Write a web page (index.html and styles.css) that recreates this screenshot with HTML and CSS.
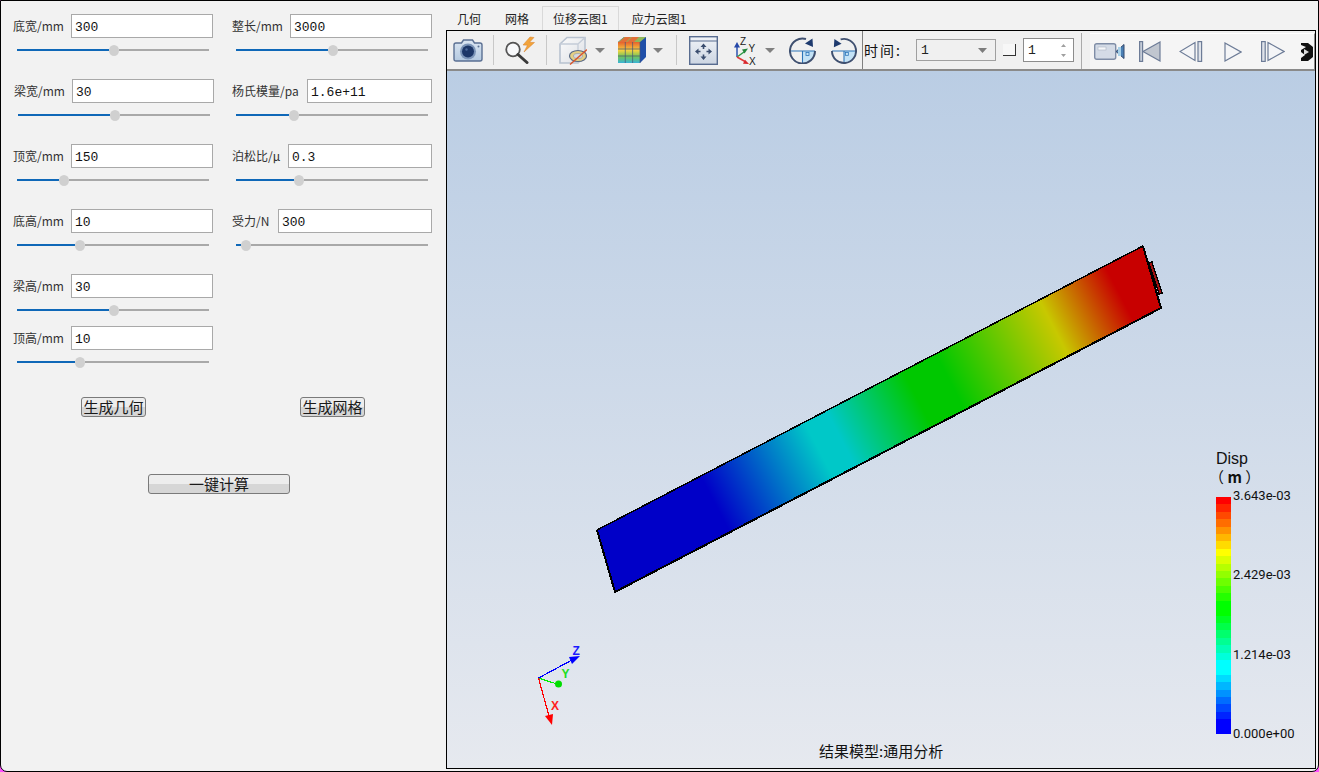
FILE: index.html
```html
<!DOCTYPE html>
<html lang="zh-CN">
<head>
<meta charset="utf-8">
<title>结果模型</title>
<link rel="stylesheet" href="styles.css">
</head>
<body>
<div class="window">
  <aside class="side">
    <div class="fields">
      <div class="col">
        <div class="field"><div class="row"><label class="lbl w58">底宽/mm</label><input class="inp wa" value="300" readonly></div><div class="slider"><i class="fill" style="width:92px"></i><b class="knob"></b><i class="rest"></i></div></div>
        <div class="field shift"><div class="row"><label class="lbl w58">梁宽/mm</label><input class="inp wa" value="30" readonly></div><div class="slider"><i class="fill" style="width:92px"></i><b class="knob"></b><i class="rest"></i></div></div>
        <div class="field"><div class="row"><label class="lbl w58">顶宽/mm</label><input class="inp wa" value="150" readonly></div><div class="slider"><i class="fill" style="width:42px"></i><b class="knob"></b><i class="rest"></i></div></div>
        <div class="field"><div class="row"><label class="lbl w58">底高/mm</label><input class="inp wa" value="10" readonly></div><div class="slider"><i class="fill" style="width:58px"></i><b class="knob"></b><i class="rest"></i></div></div>
        <div class="field tight"><div class="row"><label class="lbl w58">梁高/mm</label><input class="inp wa" value="30" readonly></div><div class="slider"><i class="fill" style="width:92px"></i><b class="knob"></b><i class="rest"></i></div></div>
        <div class="field last"><div class="row"><label class="lbl w58">顶高/mm</label><input class="inp wa" value="10" readonly></div><div class="slider"><i class="fill" style="width:58px"></i><b class="knob"></b><i class="rest"></i></div></div>
      </div>
      <div class="col">
        <div class="field"><div class="row"><label class="lbl w58">整长/mm</label><input class="inp wb" value="3000" readonly></div><div class="slider"><i class="fill" style="width:92px"></i><b class="knob"></b><i class="rest"></i></div></div>
        <div class="field"><div class="row"><label class="lbl w75">杨氏模量/pa</label><input class="inp wb" value="1.6e+11" readonly></div><div class="slider"><i class="fill" style="width:53px"></i><b class="knob"></b><i class="rest"></i></div></div>
        <div class="field"><div class="row"><label class="lbl w56">泊松比/μ</label><input class="inp wb" value="0.3" readonly></div><div class="slider"><i class="fill" style="width:58px"></i><b class="knob"></b><i class="rest"></i></div></div>
        <div class="field"><div class="row"><label class="lbl w46">受力/N</label><input class="inp wb" value="300" readonly></div><div class="slider"><i class="fill" style="width:5px"></i><b class="knob"></b><i class="rest"></i></div></div>
      </div>
    </div>
    <div class="actions">
      <button class="btn small">生成几何</button>
      <button class="btn small">生成网格</button>
    </div>
    <button class="btn wide">一键计算</button>
  </aside>

  <main class="main">
    <nav class="tabs">
      <span class="tab">几何</span>
      <span class="tab">网格</span>
      <span class="tab active">位移云图1</span>
      <span class="tab">应力云图1</span>
    </nav>
    <section class="view">
      <div class="bar">
        <div class="tools">
          <svg class="i-camera" width="30" height="24" viewBox="0 0 30 24"><defs><linearGradient id="cam" x1="0" y1="0" x2="0" y2="1"><stop offset="0" stop-color="#dbe6f2"/><stop offset="1" stop-color="#b4c9e0"/></linearGradient></defs><path d="M1 7q0-2 2-2h5.500l2-3h9l2 3H27q2 0 2 2v14q0 2-2 2H3q-2 0-2-2z" fill="url(#cam)" stroke="#5a6f92" stroke-width="1.400"/><circle cx="15" cy="13.500" r="8" fill="#7c95b8"/><circle cx="15" cy="13.500" r="6" fill="#1d3768"/><circle cx="13.500" cy="11.500" r="1.200" fill="#4c6a9c"/><circle cx="25.500" cy="8.500" r="1" fill="#5a6f92"/></svg>
          <span class="sep s1"></span>
          <svg class="i-lens" width="30" height="28" viewBox="0 0 30 28"><circle cx="8" cy="13.500" r="6.800" fill="#f8f9fb" stroke="#555" stroke-width="1.800"/><path d="M13 18.500l9 8" stroke="#3a3a3a" stroke-width="3" stroke-linecap="round"/><path d="M25 1l-7 8 4.500 .2L19 16l10.500-9.500-5-.2L29 1.500z" fill="#f2a33a" stroke="#d9802a" stroke-width=".5"/></svg>
          <span class="sep s2"></span>
          <svg class="i-box" width="28" height="29" viewBox="0 0 28 29"><defs><linearGradient id="boxf" x1="0" y1="0" x2="1" y2="1"><stop offset="0" stop-color="#fbfbfc"/><stop offset="1" stop-color="#dcdfe4"/></linearGradient></defs><path d="M1 8l7-6.500h18v18l-7 7.500H1z" fill="url(#boxf)" stroke="#b8c2d0" stroke-width="1.600"/><path d="M1 8h18v19M19 8l7-6.500" fill="none" stroke="#c4ccd8" stroke-width="1.300"/><ellipse cx="19" cy="20" rx="8.500" ry="5.500" fill="#e4cf85" stroke="#5b6b86" stroke-width="1.200"/><ellipse cx="19" cy="20" rx="4.500" ry="2.500" fill="#d5d9e0" stroke="#8b95a8" stroke-width=".6"/><path d="M11 28.500l17-15" stroke="#d9542b" stroke-width="1.400"/></svg>
          <svg class="tri t1" width="10" height="5" viewBox="0 0 10 5"><path d="M0 0h10l-5 5z" fill="#808080"/></svg>
          <svg class="i-cube" width="28" height="28" viewBox="0 0 28 28"><defs><linearGradient id="cubef" x1="0" y1="0" x2="0" y2="1"><stop offset="0" stop-color="#e8602c"/><stop offset=".4" stop-color="#f4d23f"/><stop offset=".7" stop-color="#6fc45a"/><stop offset="1" stop-color="#38b4d8"/></linearGradient></defs><path d="M0 6l6-5h22v20l-6 6H0z" fill="#1f4fa8"/><path d="M0 6l6-5h22l-6 5z" fill="#8fb85a"/><path d="M7 1l-6 5h7l5-5zM14 1l-5 5h7l5-5z" fill="#e0703a"/><rect y="6" width="22" height="21" fill="url(#cubef)"/><path d="M7.300 6v21M14.600 6v21M0 13h22M0 20h22M22 6v21" stroke="#44557a" stroke-width=".7"/></svg>
          <svg class="tri t2" width="10" height="5" viewBox="0 0 10 5"><path d="M0 0h10l-5 5z" fill="#808080"/></svg>
          <span class="sep s3"></span>
          <svg class="i-fit" width="29" height="29" viewBox="0 0 29 29"><defs><linearGradient id="fitb" x1="0" y1="0" x2="0" y2="1"><stop offset="0" stop-color="#f0f3f7"/><stop offset="1" stop-color="#ccd5e2"/></linearGradient></defs><rect x=".7" y=".7" width="27.600" height="27.600" fill="url(#fitb)" stroke="#586c90" stroke-width="1.400"/><path d="M1 5h27" stroke="#586c90" stroke-width="1.200"/><path d="M14.500 7.500l3 3.500h-2.200v2h-1.600v-2h-2.200zM14.500 24l-3-3.500h2.200v-2h1.600v2h2.200zM6 15.500l3.500-3v2.200h2v1.600h-2v2.200zM23 15.500l-3.500 3v-2.200h-2v-1.600h2v-2.200z" fill="#3a4d6e"/></svg>
          <svg class="i-axes" width="25" height="31" viewBox="0 0 25 31"><path d="M4 22V12" stroke="#2c55b0" stroke-width="1.500"/><path d="M4 7l-3 5.500h6z" fill="#2447a8"/><path d="M4 22l7-5" stroke="#2e9a48" stroke-width="1.500"/><path d="M15 13.500l-6 1 2.500 4z" fill="#23863d"/><path d="M4 22l8 4.500" stroke="#e0383a" stroke-width="1.500"/><path d="M16 29l-6-.2 2-4z" fill="#d9282c"/><text class="axt" x="7" y="10">Z</text><text class="axt" x="15.500" y="17">Y</text><text class="axt" x="16" y="30">X</text></svg>
          <svg class="tri t3" width="10" height="5" viewBox="0 0 10 5"><path d="M0 0h10l-5 5z" fill="#808080"/></svg>
          <svg class="i-rot1" width="27" height="27" viewBox="0 0 27 27"><path d="M13.500 14H26A12.500 12.500 0 0 1 13.500 26.500z" fill="#c3e2f6"/><path d="M1 14h25M13.500 14v12.500" stroke="#2c74b8" stroke-width="1.100"/><rect x="17" y="15.500" width="3" height="3" fill="none" stroke="#2c74b8" stroke-width=".8"/><path d="M17 2A12.500 12.500 0 1 0 26 14" fill="none" stroke="#3f5070" stroke-width="2"/><path d="M23.500 1.500l.5 8.500-8-3.500z" fill="#1e3a6e"/></svg>
          <svg class="i-rot2" width="26" height="27" viewBox="0 0 27 27"><path d="M13.500 14H26A12.500 12.500 0 0 1 13.500 26.500z" fill="#c3e2f6"/><path d="M1 14h25M13.500 14v12.500" stroke="#2c74b8" stroke-width="1.100"/><rect x="15" y="15.500" width="3" height="3" fill="none" stroke="#2c74b8" stroke-width=".8"/><path d="M10 2A12.500 12.500 0 1 1 1 14" fill="none" stroke="#3f5070" stroke-width="2"/><path d="M3.500 1.500L3 10l8-3.500z" fill="#1e3a6e"/></svg>
        </div>
        <div class="time">
          <span class="time-label">时间:</span>
          <div class="combo"><span>1</span><svg width="9" height="5" viewBox="0 0 9 5"><path d="M0 0h9L4.500 5z" fill="#7c7c7c"/></svg></div>
          <span class="check"></span>
          <div class="spin"><span>1</span><svg width="7" height="15" viewBox="0 0 7 15"><path d="M3.500 1L6 4H1zM3.500 14L1 11h5z" fill="#a0a0a0"/></svg></div>
          <span class="sep2"></span>
        </div>
        <div class="play">
          <svg class="p-video" width="31" height="19" viewBox="0 0 31 19"><rect x=".7" y="1.700" width="21" height="15.600" rx="2" fill="#d4dbe6" stroke="#7f8da6" stroke-width="1.400"/><rect x="4" y="5" width="8" height="3" fill="#f6f7f9" stroke="#aab4c4" stroke-width=".6"/><path d="M22 9.500l8-7v14z" fill="#4b80b5" stroke="#33486c"/><path d="M24 5h3v9h-3z" fill="#a7d0e8"/></svg>
          <svg class="p-first" width="22" height="21" viewBox="0 0 22 21"><rect x=".6" y=".6" width="3" height="19.800" fill="#c5ccd8" stroke="#6d7c97" stroke-width="1.200"/><path d="M21 1v19L4 10.500z" fill="#c0c6cf" stroke="#6d7c97" stroke-width="1.200"/></svg>
          <svg class="p-prev" width="24" height="21" viewBox="0 0 24 21"><path d="M16 1.500v18L1 10.500z" fill="#f4f5f7" stroke="#6d7c97" stroke-width="1.200"/><rect x="19" y=".6" width="3.600" height="19.800" fill="#dfe3ea" stroke="#6d7c97" stroke-width="1.200"/></svg>
          <svg class="p-play" width="18" height="20" viewBox="0 0 18 20"><path d="M1 1v18l16-9z" fill="#f4f5f7" stroke="#6d7c97" stroke-width="1.200"/></svg>
          <svg class="p-next" width="24" height="21" viewBox="0 0 24 21"><rect x=".6" y=".6" width="3.600" height="19.800" fill="#dfe3ea" stroke="#6d7c97" stroke-width="1.200"/><path d="M7 1.500v18l16-9z" fill="#f4f5f7" stroke="#6d7c97" stroke-width="1.200"/></svg>
          <svg class="p-more" width="12" height="18" viewBox="0 0 12 18"><path d="M0 0h7l5 4v10l-5 4H0v-3l4-3-4-3V7l5-3-5-2z" fill="#111"/><path d="M3 6l5 3-5 3z" fill="#ddd"/></svg>
        </div>
      </div>
      <div class="canvas">
        <svg class="scene" width="868" height="697" viewBox="447 71 868 697">
          <defs>
            <linearGradient id="disp" gradientUnits="userSpaceOnUse" x1="606" y1="561" x2="1152" y2="276">
              <stop offset="0" stop-color="#0000c8"/>
              <stop offset=".2" stop-color="#0000c8"/>
              <stop offset=".39" stop-color="#00c8c8"/>
              <stop offset=".43" stop-color="#00c8c8"/>
              <stop offset=".57" stop-color="#00c800"/>
              <stop offset=".63" stop-color="#00c800"/>
              <stop offset=".82" stop-color="#c8c800"/>
              <stop offset=".94" stop-color="#c80000"/>
              <stop offset="1" stop-color="#c80000"/>
            </linearGradient>
          </defs>
          <path d="M1149 263l3-1 10 31-3 1z" fill="#a01010" stroke="#000" stroke-width="1.300" shape-rendering="crispEdges"/>
          <path d="M597 530L1143 246 1161 308 615 592z" fill="url(#disp)" shape-rendering="crispEdges"/>
          <path d="M597 530L1143 246" stroke="#000" stroke-width="1.500" fill="none" shape-rendering="crispEdges"/>
          <path d="M1143 246L1161 308 615 592 597 530" stroke="#000" stroke-width="2" fill="none" shape-rendering="crispEdges"/>
          <path d="M538.500 678L572 660" stroke="#0000ff" stroke-width="1.200" shape-rendering="crispEdges"/>
          <path d="M569 657l11-1-8 8z" fill="#0000ff"/>
          <path d="M538.500 678L557 684" stroke="#00ee00" stroke-width="1.200" shape-rendering="crispEdges"/>
          <circle cx="558.500" cy="684" r="3.500" fill="#00dd00"/>
          <path d="M538.500 678L549 716" stroke="#ff0000" stroke-width="1.200" shape-rendering="crispEdges"/>
          <path d="M545 716l8-2-1 11z" fill="#ff0000"/>
          <text class="tz" x="572.500" y="655">Z</text>
          <text class="ty" x="561.500" y="678">Y</text>
          <text class="tx" x="551" y="710">X</text>
        </svg>
        <div class="legend">
          <div class="legend-title">Disp</div>
          <div class="legend-unit">（ <b>m</b> ）</div>
          <div class="legend-body">
            <div class="ramp"></div>
            <div class="ticks"><span>3.643e-03</span><span>2.429e-03</span><span>1.214e-03</span><span>0.000e+00</span></div>
          </div>
        </div>
        <div class="caption">结果模型:通用分析</div>
      </div>
    </section>
  </main>
</div>
</body>
</html>
```
FILE: styles.css
```css
* { box-sizing: border-box; }
html, body { margin: 0; padding: 0; height: 100%; background: #ff4dff; overflow: hidden; }
body { font-family: "Noto Sans CJK SC", "Liberation Sans", sans-serif; color: #222; }

.window {
  display: flex;
  width: 1319px;
  height: 772px;
  border: 1px solid #000;
  border-radius: 0 0 7px 7px;
  background: #f2f2f2;
  overflow: hidden;
}

/* left form */
.side { flex: 0 0 445px; padding: 13px 0 0 12px; }
.fields { display: grid; grid-template-columns: 202px 200px; column-gap: 17px; }
.col { display: flex; flex-direction: column; }
.field { height: 44px; margin-bottom: 21px; }
.field.tight { margin-bottom: 8px; }
.field.last { margin-bottom: 0; }
.field.shift { margin-left: 1px; }
.row { display: flex; align-items: center; height: 24px; }
.lbl { font-size: 12px; line-height: 16px; white-space: nowrap; color: #333; }
.w58 { flex: 0 0 58px; }
.w75 { flex: 0 0 75px; }
.w56 { flex: 0 0 56px; }
.w46 { flex: 0 0 46px; }
.inp {
  height: 24px;
  padding: 2px 3px 0;
  border: 1px solid #a9a9a9;
  background: #fff;
  color: #111;
  font: 13px/20px "Liberation Mono", monospace;
  outline: none;
  min-width: 0;
}
.wa { width: 142px; }
.wb { flex: 1; }
.slider { display: flex; align-items: center; height: 16px; margin: 4px 4px 0 4px; width: 192px; }
.fill { display: block; height: 2px; background: #0f68b8; }
.knob { flex: 0 0 10px; height: 11px; border-radius: 50%; background: #d0d0d0; }
.rest { flex: 1; height: 2px; background: #a9a9a9; }

.actions { display: flex; gap: 154px; margin: 27px 0 0 68px; }
.btn {
  display: block;
  height: 20px;
  padding: 0;
  border: 1px solid #7a7a7a;
  border-radius: 3px;
  background: linear-gradient(#ededed 0 50%, #d6d6d6 50%);
  color: #1a1a1a;
  font: 15px/18px "Noto Sans CJK SC", sans-serif;
}
.small { width: 65px; }
.wide { width: 142px; margin: 57px 0 0 135px; }

/* right */
.main { flex: 1; display: flex; flex-direction: column; min-width: 0; padding: 0 2px 2px 0; }
.tabs { display: flex; align-items: stretch; height: 24px; margin-top: 5px; flex: none; }
.tab { padding: 0 13px 0 11px; font-size: 12px; line-height: 26px; color: #222; }
.tab.active { margin-right: 2px; border: 1px solid #d9d9d9; border-bottom: 0; padding: 0 10px 0 10px; line-height: 24px; height: 25px; }
.view { flex: 1; display: flex; flex-direction: column; border: 1px solid #000; min-height: 0; }

.bar { display: flex; height: 40px; flex: none; border-bottom: 2px solid #8a8a8a; background: #f0f0f0; }
.tools { display: flex; align-items: center; width: 416px; border-right: 1px solid #808080; flex: none; }
.tools svg { flex: none; }
.sep { flex: none; width: 1px; height: 30px; background: #c8c8c8; }
.i-camera { margin-left: 6px; }
.s1 { margin-left: 10px; }
.i-lens { margin-left: 11px; }
.s2 { margin-left: 11px; }
.i-box { margin-left: 12px; }
.t1 { margin-left: 8px; }
.i-cube { margin-left: 13px; }
.t2 { margin-left: 7px; }
.s3 { margin-left: 13px; }
.i-fit { margin-left: 12px; }
.i-axes { margin-left: 15px; }
.axt { font: 10px "Liberation Sans", sans-serif; fill: #222; }
.t3 { margin-left: 7px; }
.i-rot1 { margin-left: 14px; }
.i-rot2 { margin-left: 15px; }

.time { display: flex; align-items: center; width: 227px; flex: none; }
.time-label { width: 38px; margin-left: 1px; font-size: 14px; letter-spacing: 2px; white-space: nowrap; color: #111; flex: none; }
.combo {
  display: flex; align-items: center; justify-content: space-between;
  width: 80px; height: 22px; margin-left: 14px; padding: 0 8px 0 4px; flex: none;
  border: 1px solid #a0a0a0; background: #f0f0f0;
  font: 13px "Liberation Mono", monospace;
}
.check { flex: none; width: 13px; height: 12px; margin-left: 7px; border-right: 1px solid #333; border-bottom: 1px solid #333; background: #f7f7f7; }
.spin {
  display: flex; align-items: center; justify-content: space-between;
  width: 51px; height: 24px; margin-left: 7px; padding: 0 6px 0 4px; flex: none;
  border: 1px solid #8c8c8c; background: #fff;
  font: 13px "Liberation Mono", monospace;
}
.sep2 { flex: none; align-self: stretch; width: 1px; margin-left: 7px; margin-top: 2px; background: #aaa; }

.play { display: flex; align-items: center; flex: 1; min-width: 0; overflow: hidden; margin-top: 2px; background: #f5f5f5; border-top: 1px solid #fff; border-right: 1px solid #8a8a8a; }
.play svg { flex: none; }
.p-video { margin-left: 4px; }
.p-first { margin-left: 14px; }
.p-prev { margin-left: 18px; }
.p-play { margin-left: 21px; }
.p-next { margin-left: 19px; }
.p-more { margin-left: 16px; }

.canvas { position: relative; flex: 1; min-height: 0; background: linear-gradient(#bacde4, #e6e9ef); overflow: hidden; }
.scene { position: absolute; left: 0; top: 0; }
.tz, .ty, .tx { font: bold 12px "Liberation Sans", sans-serif; }
.tz { fill: #1a1aff; }
.ty { fill: #22dd22; }
.tx { fill: #ff2020; }

.legend { position: absolute; left: 769px; top: 379px; width: 90px; color: #111; }
.legend-title { font: 16px/18px "Liberation Sans", sans-serif; color: #111; }
.legend-unit { margin-left: -7px; font: 15px/18px "Noto Sans CJK SC", sans-serif; white-space: nowrap; }
.legend-body { display: flex; margin-top: 11px; }
.ramp {
  flex: none; width: 15px; height: 237px;
  background: linear-gradient(
    #ff0000 0 3.125%, #ff2400 3.125% 6.25%, #ff4900 6.25% 9.375%, #ff6d00 9.375% 12.5%,
    #ff9200 12.5% 15.625%, #ffb600 15.625% 18.75%, #ffdb00 18.75% 21.875%, #ffff00 21.875% 25%,
    #dbff00 25% 28.125%, #b6ff00 28.125% 31.25%, #92ff00 31.25% 34.375%, #6dff00 34.375% 37.5%,
    #49ff00 37.5% 40.625%, #24ff00 40.625% 43.75%, #00ff00 43.75% 50%,
    #00ff24 50% 53.125%, #00ff49 53.125% 56.25%, #00ff6d 56.25% 59.375%, #00ff92 59.375% 62.5%,
    #00ffb6 62.5% 65.625%, #00ffdb 65.625% 68.75%, #00ffff 68.75% 75%,
    #00dbff 75% 78.125%, #00b6ff 78.125% 81.25%, #0092ff 81.25% 84.375%, #006dff 84.375% 87.5%,
    #0049ff 87.5% 90.625%, #0024ff 90.625% 93.75%, #0000ff 93.75% 100%
  );
}
.ticks { display: flex; flex-direction: column; justify-content: space-between; height: 254px; margin: -9px 0 0 2px; font: 13px/16px Roboto, sans-serif; color: #111; white-space: nowrap; }
.caption { position: absolute; left: 372px; top: 671px; font-size: 15px; line-height: 18px; color: #111; white-space: nowrap; }
```
